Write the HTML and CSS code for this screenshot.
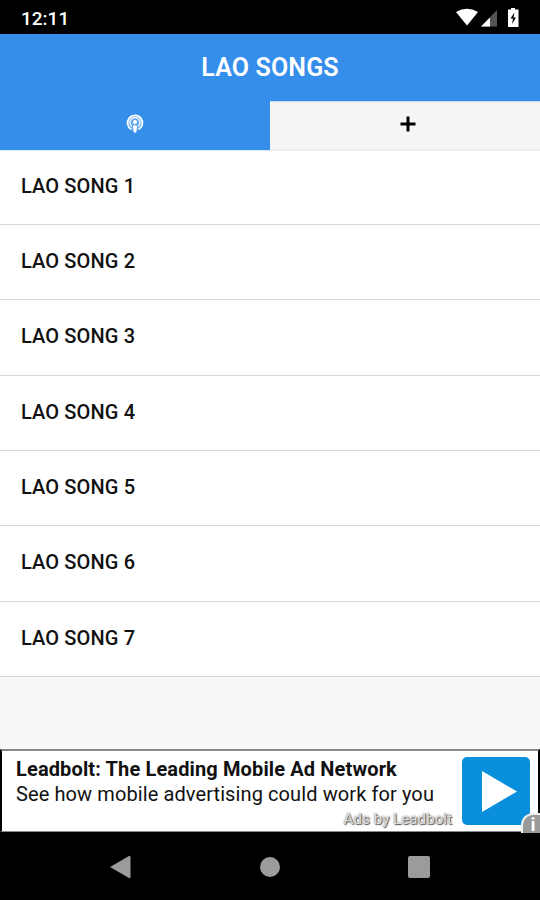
FILE: index.html
```html
<!DOCTYPE html>
<html lang="en">
<head>
    <meta charset="UTF-8">
    <meta name="viewport" content="width=device-width, initial-scale=1.0">
    <title>LAO SONGS</title>
    <link rel="stylesheet" href="styles.css">
</head>
<body>
    <div class="status-bar">
        <span class="clock">12:11</span>
        <svg class="status-icons" width="66" height="22" viewBox="0 0 66 22">
            <path d="M1 4Q12 -2.500 23 4L12 17.500Z" fill="#fff"/>
            <path d="M42 2V18.500H26Z" fill="#555"/>
            <path d="M35 9.500V18.500H26Z" fill="#fff"/>
            <path d="M53 1.500h3V0h4v1.500h3.500V19H53Z" fill="#fff"/>
            <path d="M59.500 4.500l-4 6h2.500l-1 5.500l4-6.500h-2.500Z" fill="#000"/>
        </svg>
    </div>

    <div class="header">LAO SONGS</div>

    <div class="tabs">
        <div class="tab active">
            <svg width="18" height="20" viewBox="0 0 18 20" fill="none" stroke="#fff">
                <circle cx="9" cy="8.500" r="7.500" fill="#fff" fill-opacity=".25" stroke="none"/>
                <path d="M5.500 15.500A7.500 7.500 0 1 1 12.500 15.500" stroke-width="1.700"/>
                <path d="M6 12.500A5 5 0 1 1 12 12.500" stroke-width="1.300"/>
                <circle cx="9" cy="8" r="2" fill="#fff" stroke="none"/>
                <path d="M7 12Q9 10.500 11 12L10.500 18Q9 19.500 7.500 18Z" fill="#fff" stroke="none"/>
            </svg>
        </div>
        <div class="tab">
            <svg width="16" height="16" viewBox="0 0 16 16">
                <path d="M8 .5V15.500M.5 8H15.500" stroke="#000" stroke-width="3"/>
            </svg>
        </div>
    </div>

    <div class="song-list">
        <div class="song">LAO SONG 1</div>
        <div class="song">LAO SONG 2</div>
        <div class="song">LAO SONG 3</div>
        <div class="song">LAO SONG 4</div>
        <div class="song">LAO SONG 5</div>
        <div class="song">LAO SONG 6</div>
        <div class="song">LAO SONG 7</div>
    </div>

    <div class="ad">
        <div class="ad-text">
            <div class="ad-title">Leadbolt: The Leading Mobile Ad Network</div>
            <div class="ad-desc">See how mobile advertising could work for you</div>
            <div class="ad-by">Ads by Leadbolt</div>
        </div>
        <div class="ad-play">
            <svg width="35" height="41" viewBox="0 0 35 41">
                <path d="M0 0L35 20.500L0 41Z" fill="#fff"/>
            </svg>
        </div>
        <div class="ad-info">i</div>
    </div>

    <div class="nav-bar">
        <svg width="22" height="24" viewBox="0 0 22 24"><path d="M0 12L19 1Q20.500 .5 20.500 2V22Q20.500 23.500 19 23Z" fill="#9b9b9b"/></svg>
        <div class="home"></div>
        <div class="recent"></div>
    </div>
</body>
</html>
```

FILE: styles.css
```css
body {
    font-family: Roboto, 'Liberation Sans', sans-serif;
    margin: 0;
    height: 900px;
    display: flex;
    flex-direction: column;
    background: #f8f8f8;
    color: #111;
    overflow: hidden;
}

.status-bar {
    display: flex;
    justify-content: space-between;
    height: 34px;
    box-sizing: border-box;
    padding: 8px 19px 0 21px;
    background: #000;
    color: #fff;
}

.clock {
    font-size: 19px;
    font-weight: 500;
    line-height: 21px;
}

.header {
    height: 67px;
    background: #348eea;
    color: #fff;
    font-size: 25px;
    font-weight: 600;
    line-height: 68px;
    letter-spacing: 0.15px;
    text-align: center;
}

.tabs {
    display: grid;
    grid-template-columns: 1fr 1fr;
    height: 49.500px;
}

.tab {
    display: flex;
    justify-content: center;
    padding: 14px 0 0 5px;
    box-sizing: border-box;
    background: #f5f5f5;
    border-top: 1px solid #c5ddf5;
    border-bottom: 2px solid #ececec;
}

.tab.active {
    background: #348eea;
    border-top-color: #348eea;
    border-bottom: 1px solid #d5e6f8;
    padding: 12px 0 0;
}

.song {
    height: 75.33px;
    box-sizing: border-box;
    padding-left: 21px;
    border-bottom: 1px solid #d8d8d8;
    background: #fff;
    font-size: 20px;
    font-weight: 500;
    line-height: 73px;
    letter-spacing: 0.13px;
}

.song:first-child {
    height: 74.600px;
    line-height: 71px;
}

.ad {
    position: relative;
    display: flex;
    justify-content: space-between;
    height: 83px;
    box-sizing: border-box;
    margin-top: auto;
    border: 2px solid #000;
    border-top-color: #888;
    border-bottom: 1px solid #888;
    background: #fff;
}

.ad-text {
    width: 450px;
    padding: 6px 0 0 14px;
    box-sizing: border-box;
    white-space: nowrap;
}

.ad-title {
    font-size: 20px;
    font-weight: 700;
    line-height: 25px;
    letter-spacing: 0.13px;
}

.ad-desc {
    font-size: 20px;
    line-height: 25px;
    letter-spacing: 0.1px;
}

.ad-by {
    color: #ddd;
    font-size: 15.200px;
    line-height: 24px;
    text-align: right;
    text-shadow: 1px 1px 1px #555, 0 0 2px #777;
}

.ad-play {
    width: 68px;
    height: 68px;
    margin: 6px 8px 0 0;
    padding: 14px 0 0 20px;
    box-sizing: border-box;
    border-radius: 5px;
    background: #098fdc;
}

/* info badge sits over the corner of the ad */
.ad-info {
    position: absolute;
    right: -2px;
    bottom: -2px;
    width: 19px;
    height: 20px;
    box-sizing: border-box;
    border: 2px solid #eee;
    border-right: 0;
    border-bottom: 0;
    border-top-left-radius: 12px;
    background: #999;
    color: #fff;
    font-size: 19px;
    font-weight: 700;
    line-height: 19px;
    padding-left: 3px;
    text-align: center;
}

.nav-bar {
    display: flex;
    justify-content: space-between;
    align-items: center;
    height: 68px;
    box-sizing: border-box;
    padding: 2px 110px 0;
    background: #000;
}

.home {
    width: 20px;
    height: 20px;
    border-radius: 50%;
    background: #9b9b9b;
}

.recent {
    width: 22px;
    height: 22px;
    border-radius: 2px;
    background: #9b9b9b;
}
```
